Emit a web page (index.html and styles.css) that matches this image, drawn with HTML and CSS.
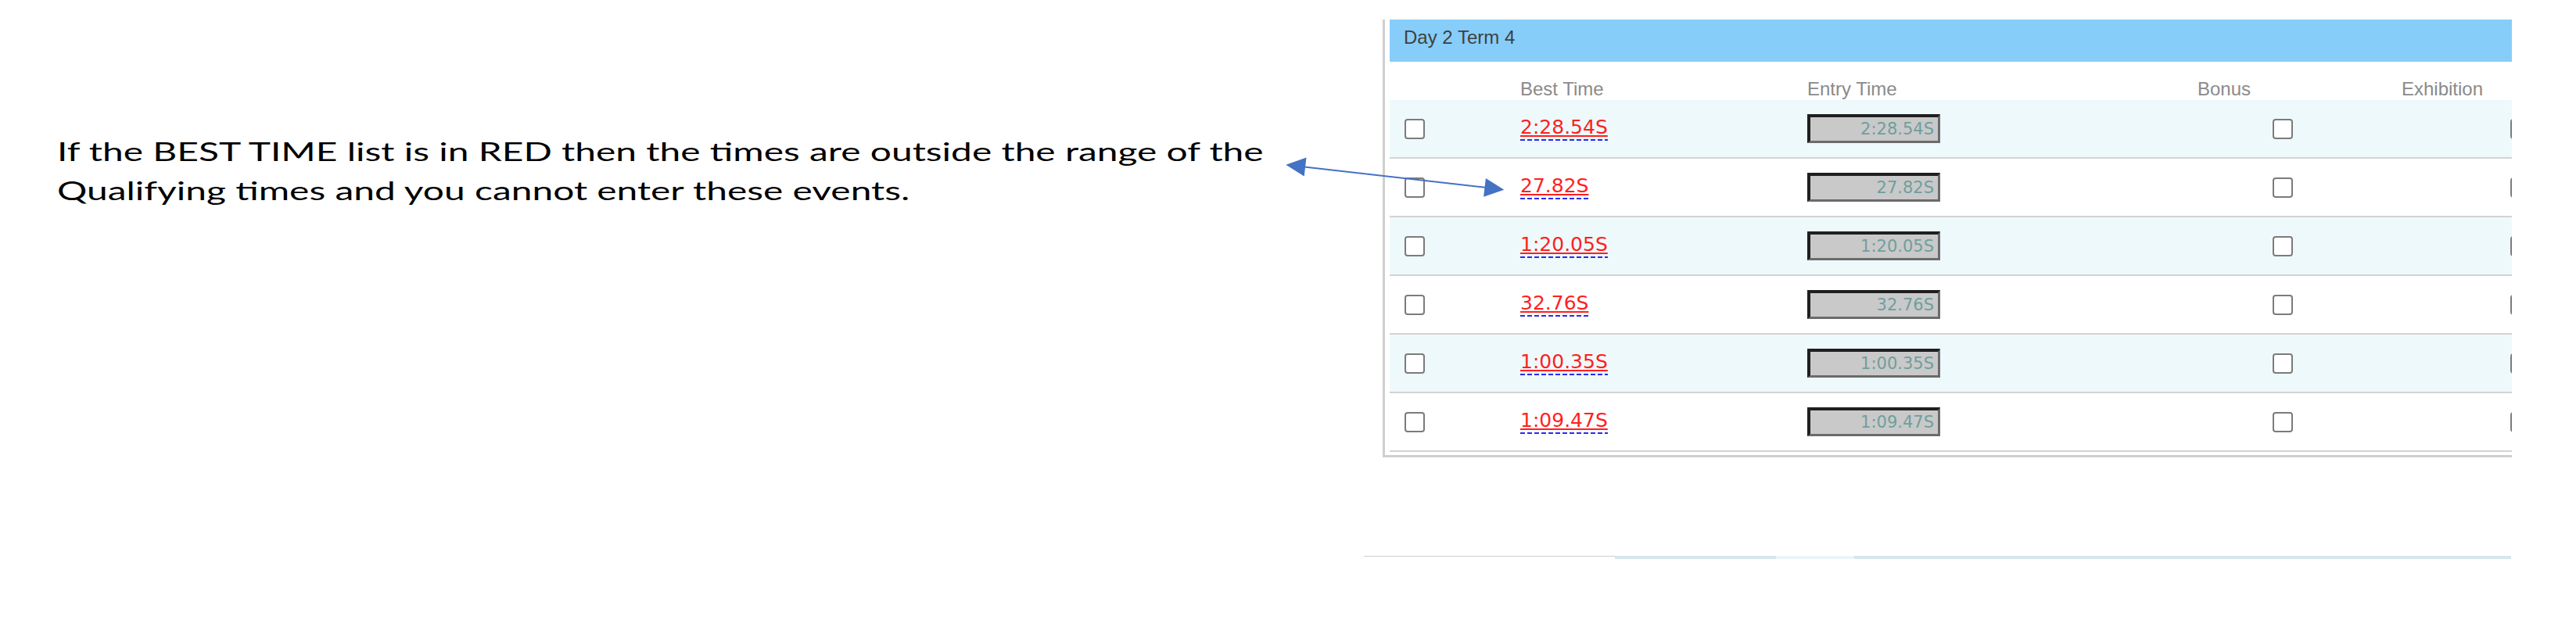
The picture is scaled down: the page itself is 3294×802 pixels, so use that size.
FILE: index.html
```html
<!DOCTYPE html>
<html lang="en">
<head>
<meta charset="utf-8">
<title>Best Time notice</title>
<link rel="stylesheet" href="styles.css">
</head>
<body>
<div class="page">
  <div class="note">
    <p class="note-text">If the BEST TIME list is in RED then the times are outside the range of the<br>Qualifying times and you cannot enter these events.</p>
  </div>
  <div class="right">
    <section class="panel">
      <div class="phead">Day 2 Term 4</div>
      <div class="grid cols"><span></span><span>Best Time</span><span>Entry Time</span><span>Bonus</span><span>Exhibition</span></div>
      <div class="grid row alt">
        <span class="c1"><input type="checkbox" class="cb"></span>
        <span><span class="bt">2:28.54S</span></span>
        <span><span class="entry">2:28.54S</span></span>
        <span class="c4"><input type="checkbox" class="cb"></span>
        <span class="c5"><input type="checkbox" class="cb"></span>
      </div>
      <div class="grid row">
        <span class="c1"><input type="checkbox" class="cb"></span>
        <span><span class="bt">27.82S</span></span>
        <span><span class="entry">27.82S</span></span>
        <span class="c4"><input type="checkbox" class="cb"></span>
        <span class="c5"><input type="checkbox" class="cb"></span>
      </div>
      <div class="grid row alt">
        <span class="c1"><input type="checkbox" class="cb"></span>
        <span><span class="bt">1:20.05S</span></span>
        <span><span class="entry">1:20.05S</span></span>
        <span class="c4"><input type="checkbox" class="cb"></span>
        <span class="c5"><input type="checkbox" class="cb"></span>
      </div>
      <div class="grid row">
        <span class="c1"><input type="checkbox" class="cb"></span>
        <span><span class="bt">32.76S</span></span>
        <span><span class="entry">32.76S</span></span>
        <span class="c4"><input type="checkbox" class="cb"></span>
        <span class="c5"><input type="checkbox" class="cb"></span>
      </div>
      <div class="grid row alt">
        <span class="c1"><input type="checkbox" class="cb"></span>
        <span><span class="bt">1:00.35S</span></span>
        <span><span class="entry">1:00.35S</span></span>
        <span class="c4"><input type="checkbox" class="cb"></span>
        <span class="c5"><input type="checkbox" class="cb"></span>
      </div>
      <div class="grid row">
        <span class="c1"><input type="checkbox" class="cb"></span>
        <span><span class="bt">1:09.47S</span></span>
        <span><span class="entry">1:09.47S</span></span>
        <span class="c4"><input type="checkbox" class="cb"></span>
        <span class="c5"><input type="checkbox" class="cb"></span>
      </div>
    </section>
    <div class="strip"><span class="s1"></span><span class="s2"></span><span class="s3"></span><span class="s4"></span></div>
  </div>
  <svg class="arrow" width="310" height="70" viewBox="0 0 310 70">
    <line x1="38" y1="23.5" x2="269" y2="49.8" stroke="#4472c4" stroke-width="2"/>
    <polygon points="14.3,20.7 40.5,11.6 37.7,35.5" fill="#4472c4"/>
    <polygon points="293.3,52.7 267.1,61.8 269.9,37.9" fill="#4472c4"/>
  </svg>
</div>
</body>
</html>
```

FILE: styles.css
```css
body {
  margin: 0;
  background: #fff;
}

.page {
  display: flex;
  position: relative;
}

.note {
  width: 1768px;
  box-sizing: border-box;
  padding: 168px 0 0 73px;
  flex: none;
}

.note-text {
  margin: 0;
  display: inline-block;
  font-family: Lato, "Open Sans", sans-serif;
  font-size: 33.5px;
  line-height: 50px;
  color: #000;
  white-space: nowrap;
  transform-origin: 0 0;
  transform: scaleX(1.43);
}

.right {
  width: 1444px;
  flex: none;
  padding-top: 25px;
}

.panel {
  border-left: 3px solid #cfcfcf;
  border-bottom: 3px solid #cfcfcf;
  padding: 0 0 4px 6px;
  overflow: hidden;
  font-family: "Liberation Sans", Arial, sans-serif;
}

.phead {
  height: 54px;
  box-sizing: border-box;
  padding: 9px 0 0 18px;
  background: #87cdf9;
  color: #404040;
  font-size: 24px;
  line-height: 28px;
}

.grid {
  display: grid;
  grid-template-columns: 167px 367px 499px 261px 1fr;
}

.cols {
  padding-top: 21px;
  font-size: 24px;
  line-height: 28px;
  color: #8a8a8a;
}

.row {
  height: 75px;
  box-sizing: border-box;
  border-bottom: 2px solid #d3d3d3;
  align-items: center;
}

.row.alt {
  background: #eef9fb;
}

.row > span {
  display: flex;
  align-items: center;
}

.c1 { padding-left: 19px; }
.c4 { padding-left: 96px; }
.c5 { padding-left: 139px; }

.cb {
  appearance: none;
  -webkit-appearance: none;
  width: 26px;
  height: 26px;
  margin: 0;
  box-sizing: border-box;
  border: 2px solid #7b7b7b;
  border-radius: 4px;
  background: #fff;
}

.bt {
  display: inline-block;
  font-family: "DejaVu Sans", Verdana, sans-serif;
  font-size: 25px;
  line-height: 25px;
  color: #ff1f1f;
  text-decoration: underline;
  text-decoration-thickness: 2px;
  text-underline-offset: 2px;
  padding-bottom: 5px;
  background: repeating-linear-gradient(to right, #2b2bea 0 6px, transparent 6px 9px) left bottom / 100% 2px no-repeat;
}

.entry {
  display: block;
  width: 170px;
  height: 37px;
  box-sizing: border-box;
  border-style: solid;
  border-width: 4px 3px 3px 4px;
  border-color: #1f1f1f #6b6b6b #6b6b6b #1f1f1f;
  background: #c9c9c9;
  font-family: "DejaVu Sans", Verdana, sans-serif;
  font-size: 21px;
  line-height: 30px;
  color: #6f9f9d;
  text-align: right;
  padding-right: 5px;
}

.strip {
  display: flex;
  height: 4px;
  margin: 126px 0 0 -24px;
  width: calc(100% + 23px);
}

.s1 {
  width: 322px;
  box-sizing: border-box;
  border-top: 1px solid #cfcfcf;
  border-right: 1px solid #e2e2e2;
  background: #fff;
}

.s2 { width: 205px; background: #d5e6ec; }
.s3 { width: 100px; background: #ebf4f7; }
.s4 { flex: 1; background: #d5e6ec; }

.arrow {
  position: absolute;
  left: 1630px;
  top: 190px;
  overflow: visible;
}
```
